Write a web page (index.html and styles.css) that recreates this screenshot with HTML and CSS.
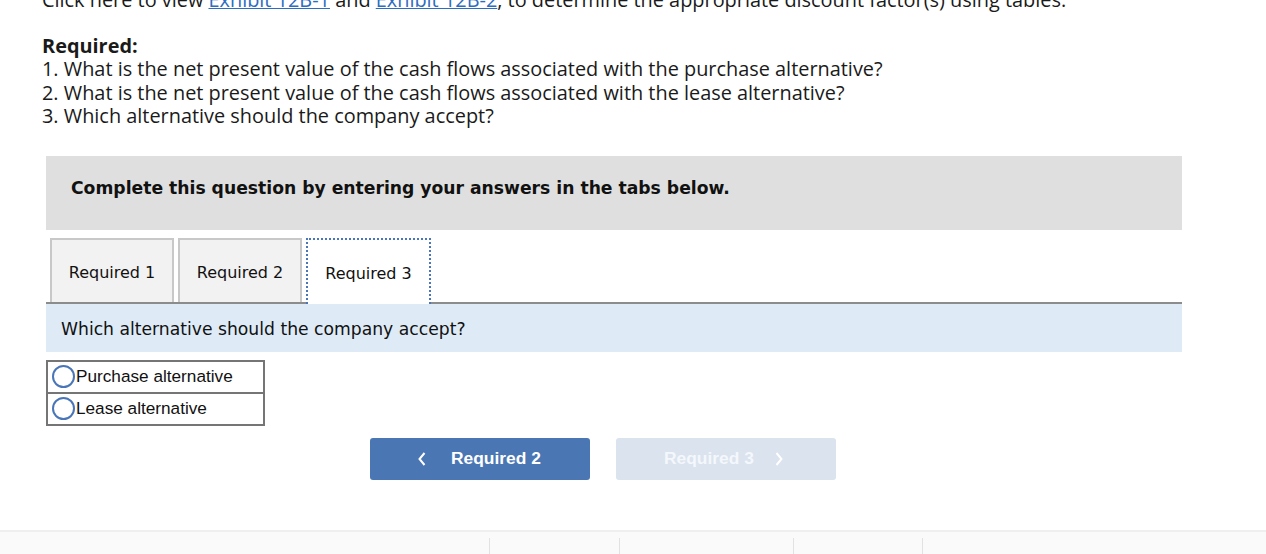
FILE: index.html
```html
<!DOCTYPE html>
<html>
<head>
<meta charset="utf-8">
<link rel="stylesheet" href="styles.css">
</head>
<body>
<div class="intro">
  <p class="cut">Click here to view <a href="#">Exhibit 12B-1</a> and <a href="#">Exhibit 12B-2</a>, to determine the appropriate discount factor(s) using tables.</p>
  <p class="req-title">Required:</p>
  <p class="req-line">1. What is the net present value of the cash flows associated with the purchase alternative?</p>
  <p class="req-line">2. What is the net present value of the cash flows associated with the lease alternative?</p>
  <p class="req-line">3. Which alternative should the company accept?</p>
</div>

<div class="panel">
  <div class="banner">Complete this question by entering your answers in the tabs below.</div>
  <div class="tabs">
    <div class="tab">Required 1</div>
    <div class="tab">Required 2</div>
    <div class="tab active">Required 3</div>
  </div>
  <div class="question">Which alternative should the company accept?</div>
  <div class="choices">
    <label class="choice"><span class="radio"></span>Purchase alternative</label>
    <label class="choice"><span class="radio"></span>Lease alternative</label>
  </div>
  <div class="nav">
    <button class="btn prev"><svg class="chev" width="10" height="16" viewBox="0 0 10 16"><path d="M7.5 2 L2.5 8 L7.5 14" fill="none" stroke="#fff" stroke-width="2"/></svg><span>Required 2</span></button>
    <button class="btn next"><span>Required 3</span><svg class="chev" width="10" height="16" viewBox="0 0 10 16"><path d="M2.5 2 L7.5 8 L2.5 14" fill="none" stroke="#fff" stroke-width="2"/></svg></button>
  </div>
</div>

<div class="footer">
  <div class="fcell w1"></div>
  <div class="fcell w2"></div>
  <div class="fcell w3"></div>
  <div class="fcell w4"></div>
  <div class="fcell w5"></div>
</div>
</body>
</html>
```

FILE: styles.css
```css
html, body {
  margin: 0;
  padding: 0;
  background: #fff;
  overflow: hidden;
}
body {
  width: 1266px;
  height: 554px;
  position: relative;
  color: #1a1a1a;
}
.intro {
  font-family: "Open Sans", "Liberation Sans", sans-serif;
  font-size: 19.9px;
  line-height: 23.5px;
  padding-left: 42px;
  margin-top: -12px;
}
.intro p {
  margin: 0;
}
.intro a {
  color: #2d6cc0;
  text-decoration: underline;
}
.cut {
  margin-bottom: 22px !important;
}
.req-title {
  font-weight: 700;
}
.panel {
  margin: 28px 0 0 46px;
  width: 1136px;
}
.banner {
  background: #dfdfdf;
  height: 74px;
  box-sizing: border-box;
  padding: 21px 0 0 25px;
  font-family: "DejaVu Sans", Verdana, sans-serif;
  font-weight: 700;
  font-size: 17.2px;
  line-height: 22px;
  color: #111;
}
.tabs {
  display: flex;
  gap: 4px;
  padding: 8px 0 0 4px;
  border-bottom: 2px solid #8c8c8c;
}
.tab {
  width: 124px;
  height: 64px;
  box-sizing: border-box;
  border: 2px solid #c8c8c8;
  border-bottom: none;
  background: #f2f2f2;
  font-family: "DejaVu Sans", Verdana, sans-serif;
  font-size: 16px;
  color: #111;
  display: flex;
  align-items: center;
  justify-content: center;
  padding-top: 4px;
}
.tab.active {
  width: 125px;
  background: #fff;
  border: 2px dotted #4a76b8;
  border-bottom: none;
  position: relative;
  margin-bottom: -2px;
  height: 66px;
}
.question {
  background: #deebf7;
  height: 48px;
  box-sizing: border-box;
  padding: 14px 0 0 15px;
  font-family: "DejaVu Sans", Verdana, sans-serif;
  font-size: 17.2px;
  line-height: 22px;
  color: #111;
}
.choices {
  margin-top: 8px;
  width: 219px;
  border: 2px solid #757575;
  box-sizing: border-box;
  display: flex;
  flex-direction: column;
}
.choice {
  display: flex;
  align-items: center;
  height: 30px;
  font-family: "Liberation Sans", Arial, sans-serif;
  font-size: 17.2px;
  color: #111;
}
.choice + .choice {
  border-top: 2px solid #757575;
}
.radio {
  width: 19px;
  height: 19px;
  border: 2px solid #4a76b8;
  border-radius: 50%;
  margin: 0 1px 0 4px;
  box-sizing: content-box;
}
.nav {
  display: flex;
  gap: 26px;
  margin: 12px 0 0 324px;
}
.btn {
  width: 220px;
  height: 42px;
  border: none;
  border-radius: 3px;
  font-family: "Liberation Sans", Arial, sans-serif;
  font-weight: 700;
  font-size: 17.4px;
  color: #fff;
  display: flex;
  align-items: center;
  justify-content: flex-start;
  padding: 0;
}
.btn.prev {
  background: #4a76b4;
  padding-left: 47px;
  gap: 24px;
}
.btn.next {
  background: #dbe3ee;
  color: #f4f7fb;
  padding-left: 48px;
  gap: 20px;
}
.footer {
  position: absolute;
  left: 0;
  right: 0;
  top: 530px;
  bottom: 0;
  background: #fafafa;
  border-top: 2px solid #efefef;
  display: flex;
  padding-top: 6px;
}
.fcell {
  height: 20px;
}
.fcell + .fcell {
  border-left: 1px solid #e2e2e2;
}
.w1 { width: 489px; }
.w2 { width: 129px; }
.w3 { width: 173px; }
.w4 { width: 128px; }
.w5 { flex: 1; }
```
